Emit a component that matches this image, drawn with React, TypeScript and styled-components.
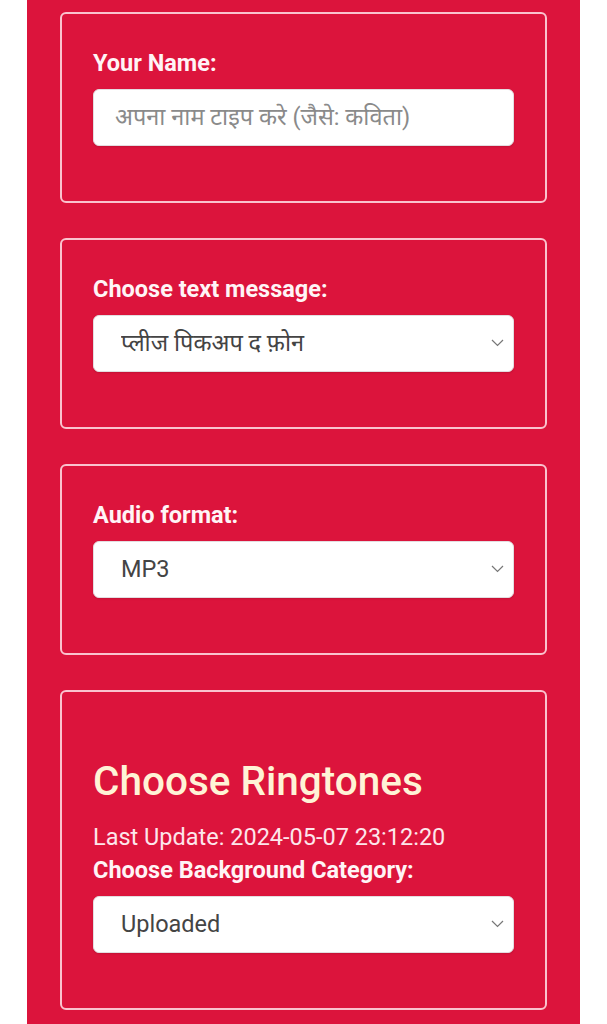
import React, { useState } from "react";
import styled, { createGlobalStyle } from "styled-components";

const GlobalStyle = createGlobalStyle`
  html, body {
    margin: 0;
    padding: 0;
    background: #ffffff;
  }
  body {
    font-family: Roboto, "Noto Sans Devanagari", "Noto Sans", "Liberation Sans", sans-serif;
  }
`;

const Page = styled.div`
  width: 553px;
  margin-left: 27px;
  background-color: #dc143c;
  padding: 12px 0 14px;
  display: flex;
  flex-direction: column;
  gap: 35px;
  box-sizing: border-box;
`;

const Card = styled.section`
  margin: 0 33px;
  padding: 34.5px 31px 55.5px;
  border: 2px solid rgba(255, 226, 232, 0.85);
  border-radius: 6px;
  display: flex;
  flex-direction: column;
`;

const Label = styled.label`
  display: block;
  font-family: Roboto, "Liberation Sans", sans-serif;
  font-weight: 700;
  font-size: 23.5px;
  line-height: 28px;
  color: #fff4f6;
  margin-bottom: 12px;
`;

const Heading = styled.h2`
  font-family: Roboto, "Liberation Sans", sans-serif;
  font-weight: 500;
  font-size: 40.5px;
  line-height: 48px;
  color: #fff3d6;
  margin: 30px 0 18px;
`;

const UpdateText = styled.p`
  font-family: Roboto, "Liberation Sans", sans-serif;
  font-weight: 400;
  font-size: 23.5px;
  line-height: 28px;
  color: #fde6eb;
  margin: 0 0 5px;
`;

const TextInput = styled.input`
  box-sizing: border-box;
  width: 100%;
  height: 57px;
  padding: 0 21px;
  border: 1px solid #e3dde0;
  border-radius: 6px;
  background: #ffffff;
  box-shadow: 0 1px 2px rgba(0, 0, 0, 0.12);
  font-family: Roboto, "Noto Sans Devanagari", "Noto Sans", sans-serif;
  font-size: 23.5px;
  color: #333333;
  outline: none;

  &::placeholder {
    color: #8a8a8a;
  }
`;

const SelectWrap = styled.div`
  position: relative;
  width: 100%;
`;

const Select = styled.select`
  box-sizing: border-box;
  width: 100%;
  height: 57px;
  padding: 0 40px 0 27px;
  border: 1px solid #e3dde0;
  border-radius: 6px;
  background: #ffffff;
  box-shadow: 0 1px 2px rgba(0, 0, 0, 0.12);
  font-family: Roboto, "Noto Sans Devanagari", "Noto Sans", sans-serif;
  font-size: 23.5px;
  color: #444444;
  appearance: none;
  -webkit-appearance: none;
  outline: none;
`;

const Chevron = styled.svg`
  position: absolute;
  right: 10px;
  top: 50%;
  width: 13px;
  height: 8px;
  margin-top: -4px;
  pointer-events: none;
`;

const Arrow = () => (
  <Chevron viewBox="0 0 13 8">
    <path d="M1 1 L6.5 6.5 L12 1" fill="none" stroke="#777" strokeWidth="1.2" />
  </Chevron>
);

const Dropdown: React.FC<{ value: string; options: string[]; onChange: (v: string) => void }> = ({
  value,
  options,
  onChange,
}) => (
  <SelectWrap>
    <Select value={value} onChange={(e) => onChange(e.target.value)}>
      {options.map((o) => (
        <option key={o} value={o}>
          {o}
        </option>
      ))}
    </Select>
    <Arrow />
  </SelectWrap>
);

export default function App() {
  const [name, setName] = useState("");
  const [message, setMessage] = useState("प्लीज पिकअप द फ़ोन");
  const [format, setFormat] = useState("MP3");
  const [category, setCategory] = useState("Uploaded");

  return (
    <>
      <GlobalStyle />
      <Page>
        <Card>
          <Label>Your Name:</Label>
          <TextInput
            value={name}
            onChange={(e) => setName(e.target.value)}
            placeholder="अपना नाम टाइप करे (जैसे: कविता)"
          />
        </Card>

        <Card>
          <Label>Choose text message:</Label>
          <Dropdown
            value={message}
            onChange={setMessage}
            options={["प्लीज पिकअप द फ़ोन", "आपका फ़ोन बज रहा है"]}
          />
        </Card>

        <Card>
          <Label>Audio format:</Label>
          <Dropdown value={format} onChange={setFormat} options={["MP3", "WAV", "M4R"]} />
        </Card>

        <Card>
          <Heading>Choose Ringtones</Heading>
          <UpdateText>Last Update: 2024-05-07 23:12:20</UpdateText>
          <Label>Choose Background Category:</Label>
          <Dropdown
            value={category}
            onChange={setCategory}
            options={["Uploaded", "Popular", "Latest"]}
          />
        </Card>
      </Page>
    </>
  );
}
